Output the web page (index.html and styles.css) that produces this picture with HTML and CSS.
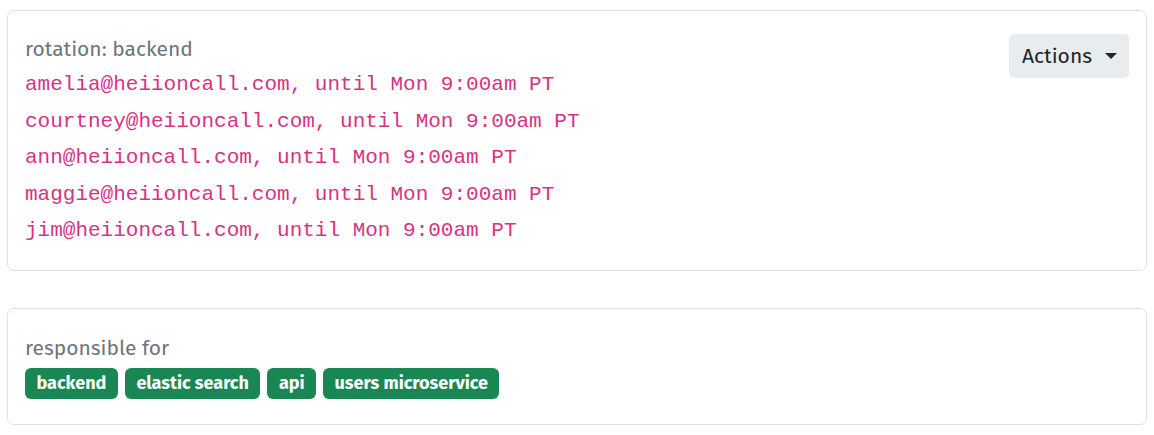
FILE: index.html
```html
<!DOCTYPE html>
<html>
<head>
<meta charset="utf-8">
<link rel="stylesheet" href="styles.css">
</head>
<body>
<div class="page">
  <section class="card">
    <div class="card-head">
      <div class="rotation">
        <div class="label">rotation: backend</div>
        <ul class="people">
          <li>amelia@heiioncall.com, until Mon 9:00am PT</li>
          <li>courtney@heiioncall.com, until Mon 9:00am PT</li>
          <li>ann@heiioncall.com, until Mon 9:00am PT</li>
          <li>maggie@heiioncall.com, until Mon 9:00am PT</li>
          <li>jim@heiioncall.com, until Mon 9:00am PT</li>
        </ul>
      </div>
      <button class="actions">Actions <span class="caret"></span></button>
    </div>
  </section>
  <section class="card card-small">
    <div class="label">responsible for</div>
    <div class="badges">
      <span class="badge">backend</span>
      <span class="badge">elastic search</span>
      <span class="badge">api</span>
      <span class="badge">users microservice</span>
    </div>
  </section>
</div>
</body>
</html>
```
FILE: styles.css
```css
html, body {
  margin: 0;
  padding: 0;
  background: #fff;
}
body {
  font-family: "Fira Sans", "Noto Sans", "Open Sans", sans-serif;
  color: #212529;
}
.page {
  padding: 10px 7px 0 7px;
  display: flex;
  flex-direction: column;
  gap: 37px;
}
.card {
  border: 1px solid #dee2e6;
  border-radius: 7px;
  padding: 22px 17px 20px 17px;
}
.card-head {
  display: flex;
  justify-content: space-between;
  align-items: flex-start;
}
.label {
  color: #6c757d;
  font-size: 21px;
  line-height: 32px;
}
.people {
  list-style: none;
  margin: 2px 0 0 0;
  padding: 0;
}
.people li {
  font-family: "Liberation Mono", monospace;
  font-size: 21px;
  line-height: 36.5px;
  color: #d63384;
}
.actions {
  font-family: inherit;
  font-size: 21px;
  color: #212529;
  background: #e9ecef;
  border: none;
  border-radius: 5px;
  height: 44px;
  padding: 0 12px 0 13px;
  display: flex;
  align-items: center;
  gap: 13px;
  margin-top: 1px;
}
.caret {
  width: 0;
  height: 0;
  border-left: 6px solid transparent;
  border-right: 6px solid transparent;
  border-top: 6px solid #212529;
}
.card-small {
  padding-top: 23px;
  padding-bottom: 25px;
}
.badges {
  display: flex;
  gap: 7px;
  margin-top: 4px;
}
.badge {
  background: #198754;
  color: #fff;
  font-weight: 700;
  font-size: 18px;
  line-height: 31px;
  padding: 0 11.5px;
  border-radius: 6px;
}
```
